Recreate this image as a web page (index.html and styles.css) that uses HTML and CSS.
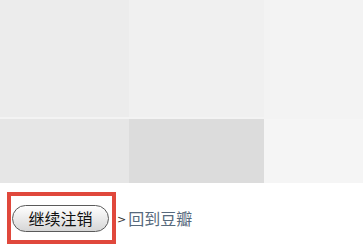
FILE: index.html
```html
<!DOCTYPE html>
<html lang="zh-CN">
<head>
  <meta charset="UTF-8"/>
  <title>注销账号</title>
  <link rel="stylesheet" href="styles.css">
</head>
<body>
  <div class="tiles">
    <div class="tile t1"></div>
    <div class="tile t2"></div>
    <div class="tile t3"></div>
    <div class="tile t4"></div>
    <div class="tile t5"></div>
    <div class="tile t6"></div>
  </div>
  <div class="actions">
    <div class="mark">
      <button class="btn">继续注销</button>
    </div>
    <span class="arrow">&gt;</span>
    <a class="back" href="#">回到豆瓣</a>
  </div>
</body>
</html>
```
FILE: styles.css
```css
body { margin:0; background:#fff; font-family:"Noto Sans CJK SC","Noto Sans",sans-serif; }
.tiles {
  display:grid; grid-template-columns:129px 135px 99px; grid-template-rows:117px 64px;
  row-gap:2px; background:#f3f3f3;
}
.t1 { background:#ececec; }
.t2 { background:#f0f0f0; }
.t3 { background:#f3f3f3; }
.t4 { background:#e6e6e6; }
.t5 { background:#dcdcdc; }
.t6 { background:#f5f5f5; }
.actions { display:flex; align-items:center; margin-top:9px; }
.mark {
  margin-left:7px; border:4px solid #e0483c; padding:9px 3px 8px 1px;
}
.btn {
  display:block; width:97px; height:27px; padding:0; margin:0;
  border:1px solid #5a5a5a; border-radius:14px;
  background:linear-gradient(#ffffff, #d6d6d6);
  font-family:inherit; font-size:16px; color:#111; line-height:25px;
}
.arrow { font-size:11px; color:#333; margin:2px 0 0 1px; font-family:"DejaVu Sans",sans-serif; }
.back { margin-left:2px; font-size:16px; color:#56697c; text-decoration:none; }
```
